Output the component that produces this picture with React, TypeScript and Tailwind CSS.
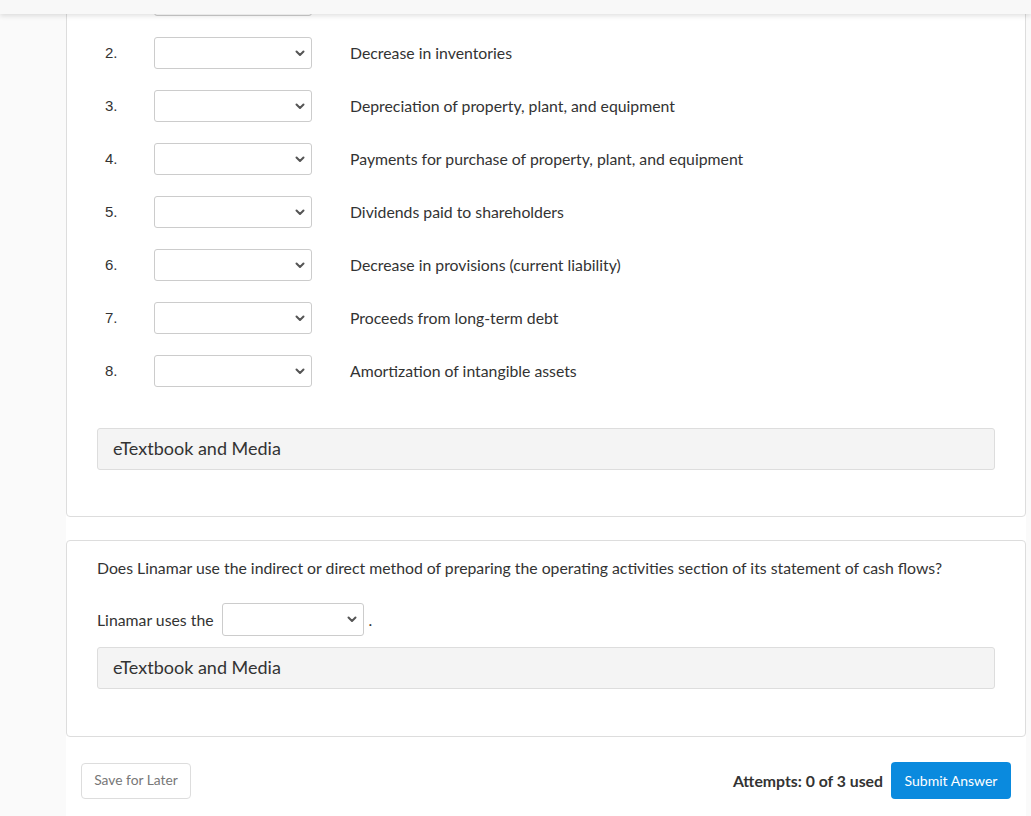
import React from "react";

const Chevron = () => (
  <svg width="10" height="7" viewBox="0 0 10 7" className="block">
    <path d="M1.5 1.5 L5 5 L8.5 1.5" fill="none" stroke="#555" strokeWidth="2" strokeLinecap="round" strokeLinejoin="round" />
  </svg>
);

const Select = ({ w, h }: { w: string; h: string }) => (
  <div className={`${w} ${h} flex items-center justify-end pr-[6px] border border-[#ccc] rounded-[3px] bg-white shrink-0`}>
    <Chevron />
  </div>
);

const rows = [
  ["", ""],
  ["2.", "Decrease in inventories"],
  ["3.", "Depreciation of property, plant, and equipment"],
  ["4.", "Payments for purchase of property, plant, and equipment"],
  ["5.", "Dividends paid to shareholders"],
  ["6.", "Decrease in provisions (current liability)"],
  ["7.", "Proceeds from long-term debt"],
  ["8.", "Amortization of intangible assets"],
];

const Box = () => (
  <div className="h-[42px] border border-[#ddd] rounded-[3px] bg-[#f4f4f4] flex items-center pl-[15px] pb-[1px] text-[18px] text-[#333]">
    eTextbook and Media
  </div>
);

export default function App() {
  return (
    <div className="min-h-[816px] h-[816px] overflow-hidden bg-[#fafafa] flex" style={{ fontFamily: "Lato, 'Open Sans', sans-serif" }}>
      <div className="fixed top-0 left-0 right-0 h-[14px] bg-[#f8f8f8] shadow-[0_2px_5px_rgba(0,0,0,0.12)] z-10" />
      <div className="w-[66px] shrink-0" />
      <div className="w-[960px] shrink-0 bg-white flex flex-col">
        <div className="-mt-[40px] border border-[#ddd] rounded-[4px] px-[30px] pt-[23px] pb-[46px]">
          <div className="flex flex-col gap-[21px]">
            {rows.map(([n, t], i) => (
              <div key={i} className="flex items-center h-[32px]">
                <div className="w-[57px] pl-[8px] text-[15px] text-[#333]" style={{ fontFamily: "'Liberation Sans', Arial, sans-serif" }}>
                  {n}
                </div>
                <Select w="w-[158px]" h="h-[32px]" />
                <div className="ml-[38px] text-[15.8px] text-[#333]">{t}</div>
              </div>
            ))}
          </div>
          <div className="mt-[41px]">
            <Box />
          </div>
        </div>
        <div className="mt-[23px] border border-[#ddd] rounded-[4px] px-[30px] pt-[15px] pb-[47px]">
          <div className="text-[15.8px] leading-[24px] text-[#333]">
            Does Linamar use the indirect or direct method of preparing the operating activities section of its statement of cash flows?
          </div>
          <div className="mt-[23px] flex items-center h-[33px] text-[15.8px] text-[#333]">
            <span>Linamar uses the</span>
            <div className="ml-[8px]">
              <Select w="w-[142px]" h="h-[33px]" />
            </div>
            <span className="ml-[5px]">.</span>
          </div>
          <div className="mt-[11px]">
            <Box />
          </div>
        </div>
        <div className="mt-[25px] px-[15px] flex items-center justify-between">
          <div className="w-[110px] h-[36px] border border-[#ddd] rounded-[4px] flex items-center justify-center text-[13.8px] text-[#777]">
            Save for Later
          </div>
          <div className="flex items-center">
            <span className="text-[15.8px] font-bold text-[#333] mr-[8px]">Attempts: 0 of 3 used</span>
            <div className="w-[120px] h-[37px] rounded-[4px] bg-[#0a8ade] flex items-center justify-center text-[14px] text-white">
              Submit Answer
            </div>
          </div>
        </div>
      </div>
    </div>
  );
}
